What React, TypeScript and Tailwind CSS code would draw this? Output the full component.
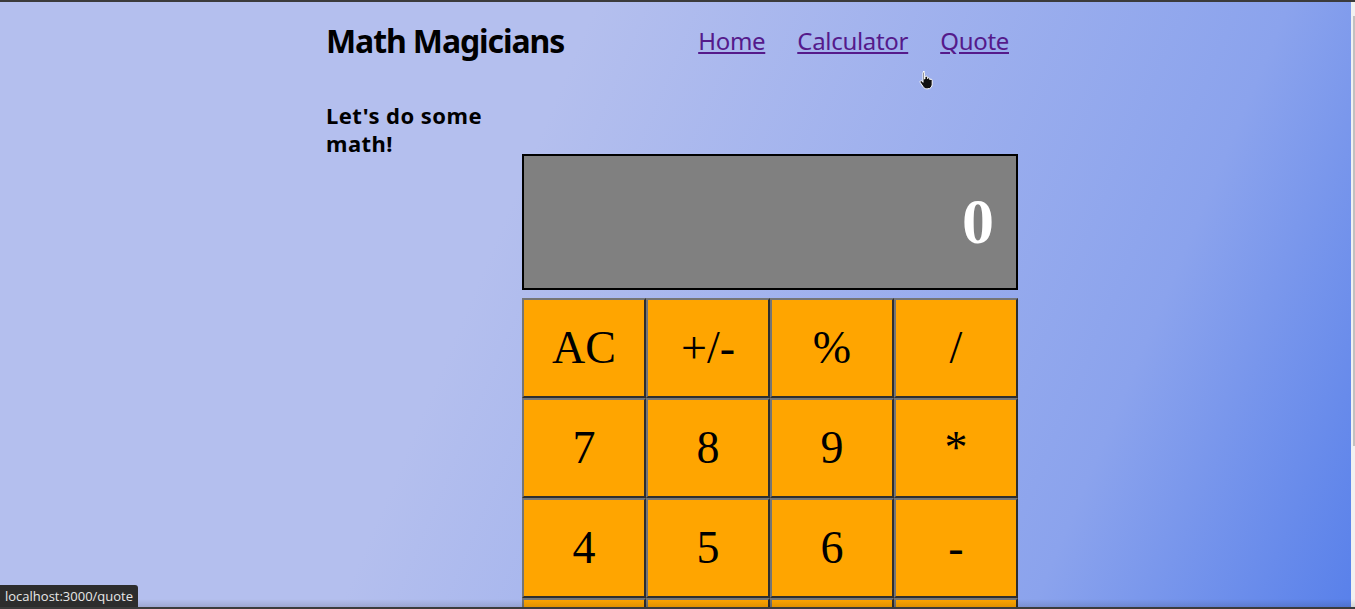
const keys = ['AC', '+/-', '%', '/', '7', '8', '9', '*', '4', '5', '6', '-', '1', '2', '3', '+'];

const Key = ({ label, wide }: { label: string; wide?: boolean }) => (
  <button
    className={`h-[100px] border-2 border-t-[#757575] border-l-[#757575] border-r-[#2e2e2e] border-b-[#2e2e2e] bg-[#ffa500] text-[46px] leading-none text-black font-['Liberation_Serif',serif] ${
      wide ? 'col-span-2' : ''
    }`}
  >
    {label}
  </button>
);

const Calculator = () => (
  <div className="mt-[53px] w-[496px]">
    <div className="flex h-[136px] items-center justify-end border-2 border-black bg-[#808080] pr-[22px] font-['Liberation_Serif',serif] text-[64px] font-bold leading-[64px] text-white">
      0
    </div>
    <div className="mt-2 grid grid-cols-4">
      {keys.map((k) => (
        <Key key={k} label={k} />
      ))}
      <Key label="0" wide />
      <Key label="." />
      <Key label="=" />
    </div>
  </div>
);

// pointer hand cursor sitting over the page
const HandCursor = () => (
  <svg className="absolute left-[919px] top-[70px]" width="16" height="20" viewBox="0 0 16 20">
    <path
      d="M4 1.5c.8 0 1.4.6 1.4 1.4V9l.6-.2V7.4c0-.7.6-1.2 1.3-1.2s1.2.5 1.2 1.2v1.2c.2-.5.7-.8 1.2-.8.7 0 1.2.5 1.2 1.2v.8c.2-.4.6-.6 1.1-.6.7 0 1.2.5 1.2 1.2v3.8c0 2.6-1.8 4.6-4.4 4.6H7.6c-1.4 0-2.5-.7-3.3-1.8L1.3 12.6c-.4-.6-.3-1.3.2-1.7.5-.4 1.2-.3 1.6.2l.9 1.2V2.9c0-.8.6-1.4 1.4-1.4z"
      fill="#111"
      stroke="#fff"
      strokeWidth="1"
    />
  </svg>
);

export default function App() {
  return (
    <div className="relative h-[609px] overflow-hidden bg-[linear-gradient(113deg,#b4bfee_0%,#b4bfee_37%,#8ba3ed_80%,#5880ea_100%)] font-['Noto_Sans',sans-serif]">
      <div className="h-[2px] bg-[#3b3b3b]" />

      <div className="ml-[326px] w-[692px]">
        {/* Header */}
        <header className="flex items-start justify-between pt-[19px]">
          <h1 className="text-[32px] font-bold leading-[40px] tracking-[-1.1px] text-black">Math Magicians</h1>
          <nav className="mt-[4px] mr-[9px] flex gap-8 text-[24px] leading-[32px] tracking-[-0.3px]">
            <a href="#" className="text-[#551a8b] underline">Home</a>
            <a href="#" className="text-[#551a8b] underline">Calculator</a>
            <a href="#" className="text-[#551a8b] underline">Quote</a>
          </nav>
        </header>

        {/* Body */}
        <main className="mt-[40px] flex items-start">
          <h2 className="w-[196px] text-[22px] font-bold leading-[28px] tracking-[0.45px] text-black">Let's do some math!</h2>
          <Calculator />
        </main>
      </div>

      <HandCursor />

      {/* browser chrome overlays */}
      <div className="absolute top-[2px] right-0 h-[607px] w-[4px] bg-[#f1f1f1]">
        <div className="mt-[14px] ml-[2px] h-[430px] w-[2px] bg-[#c1c1c1]" />
      </div>
      <div className="absolute bottom-[2px] left-0 h-[8px] w-full bg-[linear-gradient(to_bottom,rgba(0,0,0,0),rgba(0,0,0,0.12))]" />
      <div className="absolute bottom-0 left-0 h-[2px] w-full bg-[#3b3b3b]" />
      <div className="absolute bottom-[2px] left-0 rounded-tr-[3px] bg-[#2d2d2d] px-[5px] py-[2px] font-['Open_Sans',sans-serif] text-[13px] leading-[18px] text-[#e8e8e8]">
        localhost:3000/quote
      </div>
    </div>
  );
}
